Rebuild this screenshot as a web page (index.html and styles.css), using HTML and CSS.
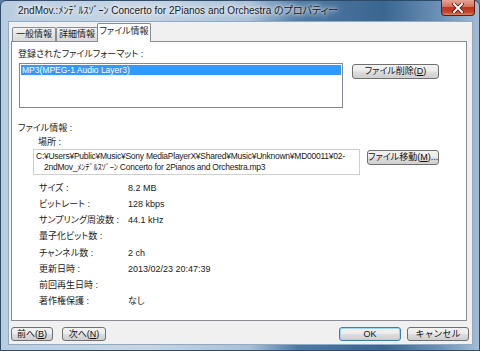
FILE: index.html
```html
<!DOCTYPE html>
<html lang="ja">
<head>
    <meta charset="UTF-8">
    <title>プロパティー</title>
    <link rel="stylesheet" href="styles.css">
</head>
<body>
    <div class="window">
        <div class="titlebar">
            <span class="title">2ndMov.:ﾒﾝﾃﾞﾙｽｿﾞｰﾝ Concerto for 2Pianos and Orchestra のプロパティー</span>
            <div class="close-btn">
                <svg width="12" height="10" viewBox="0 0 12 10">
                    <path d="M2 1 L10 9 M10 1 L2 9" stroke="#4a1208" stroke-width="3.4" stroke-linecap="square"/>
                    <path d="M2 1 L10 9 M10 1 L2 9" stroke="#fff" stroke-width="2" stroke-linecap="square"/>
                </svg>
            </div>
        </div>

        <div class="client">
            <div class="tabs">
                <div class="tab tab-1">一般情報</div>
                <div class="tab tab-2">詳細情報</div>
                <div class="tab tab-3 selected">ファイル情報</div>
            </div>

            <div class="page">
                <div class="label">登録されたファイルフォーマット :</div>
                <div class="format-row">
                    <div class="listbox">
                        <div class="list-item">MP3(MPEG-1 Audio Layer3)</div>
                    </div>
                    <div class="button btn-delete">ファイル削除(<u>D</u>)</div>
                </div>

                <div class="label section">ファイル情報 :</div>
                <div class="label place">場所 :</div>
                <div class="path-row">
                    <div class="pathbox">
                        <span class="path-line">C:¥Users¥Public¥Music¥Sony MediaPlayerX¥Shared¥Music¥Unknown¥MD00011¥02-</span>
                        <span class="path-line second">2ndMov_ﾒﾝﾃﾞﾙｽｿﾞｰﾝ Concerto for 2Pianos and Orchestra.mp3</span>
                    </div>
                    <div class="button btn-move">ファイル移動(<u>M</u>)...</div>
                </div>

                <div class="info-list">
                    <div class="info-row"><span class="info-key">サイズ :</span><span>8.2 MB</span></div>
                    <div class="info-row"><span class="info-key">ビットレート :</span><span>128 kbps</span></div>
                    <div class="info-row"><span class="info-key">サンプリング周波数 :</span><span>44.1 kHz</span></div>
                    <div class="info-row"><span class="info-key">量子化ビット数 :</span><span></span></div>
                    <div class="info-row"><span class="info-key">チャンネル数 :</span><span>2 ch</span></div>
                    <div class="info-row"><span class="info-key">更新日時 :</span><span>2013/02/23 20:47:39</span></div>
                    <div class="info-row"><span class="info-key">前回再生日時 :</span><span></span></div>
                    <div class="info-row"><span class="info-key">著作権保護 :</span><span>なし</span></div>
                </div>
            </div>

            <div class="bottom-bar">
                <div class="button btn-prev">前へ(<u>B</u>)</div>
                <div class="button btn-next">次へ(<u>N</u>)</div>
                <div class="spacer"></div>
                <div class="button btn-ok default">OK</div>
                <div class="button btn-cancel">キャンセル</div>
            </div>
        </div>
    </div>
</body>
</html>
```

FILE: styles.css
```css
body {
    margin: 0;
    padding: 0;
    width: 480px;
    height: 351px;
    overflow: hidden;
    font-family: 'Liberation Sans', 'Noto Sans CJK JP', sans-serif;
    font-size: 9px;
    color: #1a1a1a;
    background: #5b7fa5;
}

.window {
    width: 480px;
    height: 351px;
    box-sizing: border-box;
    border: 1px solid #2f4a66;
    border-radius: 6px 6px 0 0;
    background: linear-gradient(to right, #b9cde1 0%, #c6d5e4 30%, #a9c0d8 52%, #4d79a5 62%, #3a6690 80%, #6e92b7 92%, #a3bcd6 100%);
    display: flex;
    flex-direction: column;
}

.titlebar {
    height: 20px;
    display: flex;
    align-items: flex-start;
    padding: 0 4px 0 17px;
}

.title {
    font-size: 10px;
    line-height: 20px;
    color: #1a1a1a;
    white-space: nowrap;
    font-feature-settings: "palt";
    text-shadow: 0 0 6px #f4f8fc, 0 0 10px #e8eff6, 0 0 3px #fff;
}

.close-btn {
    margin-left: auto;
    margin-top: -1px;
    width: 34px;
    height: 16px;
    box-sizing: border-box;
    border: 1px solid #5a2016;
    border-top: none;
    border-radius: 0 0 4px 4px;
    background: linear-gradient(to bottom, #e7a595 0%, #d6705c 45%, #bd3520 50%, #c2432b 80%, #dd8462 100%);
    display: flex;
    align-items: center;
    justify-content: center;
}

.client {
    margin: 0 6px 0 7px;
    height: 324px;
    box-sizing: border-box;
    background: #f0f0f0;
    border: 1px solid #93a9c0;
    padding: 1px 0 0 2px;
}

.tabs {
    display: flex;
    align-items: flex-end;
    height: 18px;
}

.tab {
    height: 14px;
    box-sizing: border-box;
    border: 1px solid #898c95;
    border-bottom: none;
    background: linear-gradient(to bottom, #f3f3f3, #e3e3e3 50%, #d9d9d9);
    border-radius: 2px 2px 0 0;
    text-align: center;
    line-height: 13px;
    white-space: nowrap;
}

.tab-1 {
    width: 44px;
    margin-left: 1px;
}

.tab-2 {
    width: 42px;
}

.tab-3 {
    width: 54px;
    margin-left: -1px;
}

.tab.selected {
    position: relative;
    z-index: 1;
    height: 19px;
    margin-bottom: -1px;
    background: #fff;
    line-height: 15px;
    font-feature-settings: "palt";
}

.page {
    width: 456px;
    height: 280px;
    box-sizing: border-box;
    border: 1px solid #898c95;
    background: #fff;
    padding: 6px 0 0 6px;
    font-feature-settings: "palt";
}

.label {
    line-height: 12px;
    height: 12px;
}

.format-row {
    display: flex;
    align-items: flex-start;
    margin-top: 3px;
}

.listbox {
    margin-left: 1px;
    width: 324px;
    height: 45px;
    box-sizing: border-box;
    border: 1px solid #828790;
    padding: 1px;
}

.list-item {
    background: #3399ff;
    color: #fff;
    height: 10px;
    line-height: 10px;
    padding-left: 1px;
    font-size: 8.5px;
}

.button {
    height: 15px;
    box-sizing: border-box;
    border: 1px solid #707070;
    border-radius: 3px;
    background: linear-gradient(to bottom, #f2f2f2 0%, #ebebeb 48%, #dddddd 52%, #cfcfcf 100%);
    text-align: center;
    line-height: 13px;
    white-space: nowrap;
    color: #111;
}

.button u {
    text-decoration: underline;
}

.btn-delete {
    margin-left: 9px;
    margin-top: 1px;
    width: 87px;
}

.section {
    margin-top: 14px;
}

.place {
    margin-top: 2px;
    margin-left: 20px;
}

.path-row {
    display: flex;
    align-items: flex-start;
    margin-top: 1px;
}

.pathbox {
    margin-left: 15px;
    width: 327px;
    height: 26px;
    box-sizing: border-box;
    border: 1px solid #cfcfcf;
    padding: 1px 0 0 2px;
    font-size: 8.5px;
    letter-spacing: -0.25px;
    overflow: hidden;
}

.path-line {
    display: block;
    line-height: 11px;
    white-space: nowrap;
}

.path-line.second {
    padding-left: 8px;
}

.btn-move {
    margin-left: 7px;
    margin-top: 1px;
    width: 72px;
}

.info-list {
    margin-top: 5px;
    margin-left: 21px;
}

.info-row {
    display: flex;
    height: 16.15px;
    line-height: 16px;
}

.info-key {
    width: 89px;
    flex-shrink: 0;
}

.bottom-bar {
    display: flex;
    width: 458px;
    margin-top: 6px;
}

.spacer {
    flex: 1;
}

.btn-prev {
    width: 42px;
    height: 14px;
    line-height: 12px;
}

.btn-next {
    width: 44px;
    height: 14px;
    line-height: 12px;
    margin-left: 9px;
}

.btn-ok {
    width: 62px;
    height: 14px;
    line-height: 12px;
}

.btn-ok.default {
    border-color: #3c7fb1;
    box-shadow: inset 0 0 0 1px #9fd4f5;
}

.btn-cancel {
    width: 62px;
    height: 14px;
    line-height: 12px;
    margin-left: 6px;
}
```
